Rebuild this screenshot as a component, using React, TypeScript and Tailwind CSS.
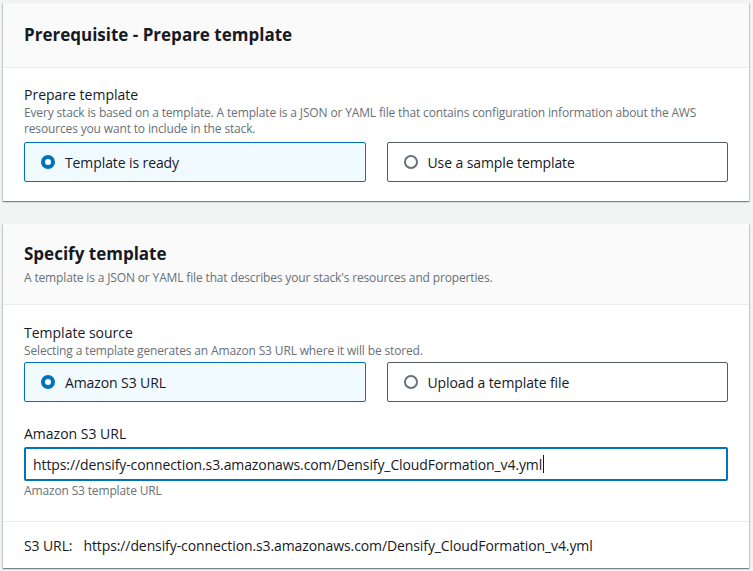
import React from "react";

const font = { fontFamily: '"Open Sans", "Noto Sans", Arial, sans-serif' };

function Radio({ checked }: { checked: boolean }) {
  return checked ? (
    <span className="box-border inline-block h-[14px] w-[14px] shrink-0 rounded-full border-[4px] border-[#0073bb] bg-white" />
  ) : (
    <span className="box-border inline-block h-[14px] w-[14px] shrink-0 rounded-full border-[2px] border-[#687078] bg-white" />
  );
}

function Tile({ label, checked }: { label: string; checked: boolean }) {
  return (
    <div
      className={
        checked
          ? "flex h-[40px] items-center gap-[10px] rounded-[2px] border border-[#0073bb] bg-[#f1faff] pl-[16px]"
          : "flex h-[40px] items-center gap-[10px] rounded-[2px] border border-[#545b64] bg-white pl-[16px]"
      }
    >
      <Radio checked={checked} />
      <span className="text-[14px] tracking-[-0.1px] text-[#16191f]">{label}</span>
    </div>
  );
}

export default function App() {
  return (
    <div className="min-h-[571px] w-[753px] bg-[#f2f3f3] pl-[3px] pr-[4px] pt-[3px]" style={font}>
      <div className="bg-white shadow-[0_1px_1px_0_rgba(0,28,36,0.3),1px_1px_1px_0_rgba(0,28,36,0.15),-1px_1px_1px_0_rgba(0,28,36,0.15)]">
        <div className="flex h-[65px] items-center border-b border-[#eaeded] bg-[#fafafa] px-[21px]">
          <h2 className="text-[17px] font-bold leading-[22px] text-[#16191f]">Prerequisite - Prepare template</h2>
        </div>
        <div className="px-[21px] pb-[19px] pt-[17px]">
          <div className="text-[14px] leading-[20px] text-[#16191f]">Prepare template</div>
          <div className="text-[12px] leading-[16px] tracking-[-0.15px] text-[#687078]">
            Every stack is based on a template. A template is a JSON or YAML file that contains configuration information about the AWS resources you want to include in the stack.
          </div>
          <div className="mt-[5px] grid grid-cols-2 gap-[21px]">
            <Tile label="Template is ready" checked />
            <Tile label="Use a sample template" checked={false} />
          </div>
        </div>
      </div>

      <div className="mt-[23px] bg-white shadow-[0_1px_1px_0_rgba(0,28,36,0.3),1px_1px_1px_0_rgba(0,28,36,0.15),-1px_1px_1px_0_rgba(0,28,36,0.15)]">
        <div className="border-b border-[#eaeded] bg-[#fafafa] px-[21px] pb-[18px] pt-[19px]">
          <h2 className="text-[17px] font-bold leading-[22px] text-[#16191f]">Specify template</h2>
          <div className="mt-[5px] text-[12px] leading-[16px] tracking-[-0.15px] text-[#687078]">
            A template is a JSON or YAML file that describes your stack's resources and properties.
          </div>
        </div>
        <div className="px-[21px] pb-[22px] pt-[18px]">
          <div className="text-[14px] leading-[20px] text-[#16191f]">Template source</div>
          <div className="text-[12px] leading-[16px] tracking-[-0.15px] text-[#687078]">
            Selecting a template generates an Amazon S3 URL where it will be stored.
          </div>
          <div className="mt-[3px] grid grid-cols-2 gap-[21px]">
            <Tile label="Amazon S3 URL" checked />
            <Tile label="Upload a template file" checked={false} />
          </div>
          <div className="mt-[22px] text-[14px] leading-[20px] text-[#16191f]">Amazon S3 URL</div>
          <div className="mt-[3px] flex h-[34px] items-center rounded-[2px] border-[2px] border-[#0073bb] px-[7px] text-[14px] tracking-[-0.1px] text-[#16191f]">
            <span>https://densify-connection.s3.amazonaws.com/Densify_CloudFormation_v4.yml</span>
            <span className="ml-[1px] inline-block h-[18px] w-[1px] bg-[#16191f]" />
          </div>
          <div className="mt-[2px] text-[12px] leading-[16px] tracking-[-0.15px] text-[#687078]">Amazon S3 template URL</div>
        </div>
        <div className="flex h-[47px] items-center border-t border-[#eaeded] px-[21px] text-[14px] tracking-[-0.1px] text-[#16191f]">
          <span>S3 URL:</span>
          <span className="ml-[11px]">https://densify-connection.s3.amazonaws.com/Densify_CloudFormation_v4.yml</span>
        </div>
      </div>
    </div>
  );
}
